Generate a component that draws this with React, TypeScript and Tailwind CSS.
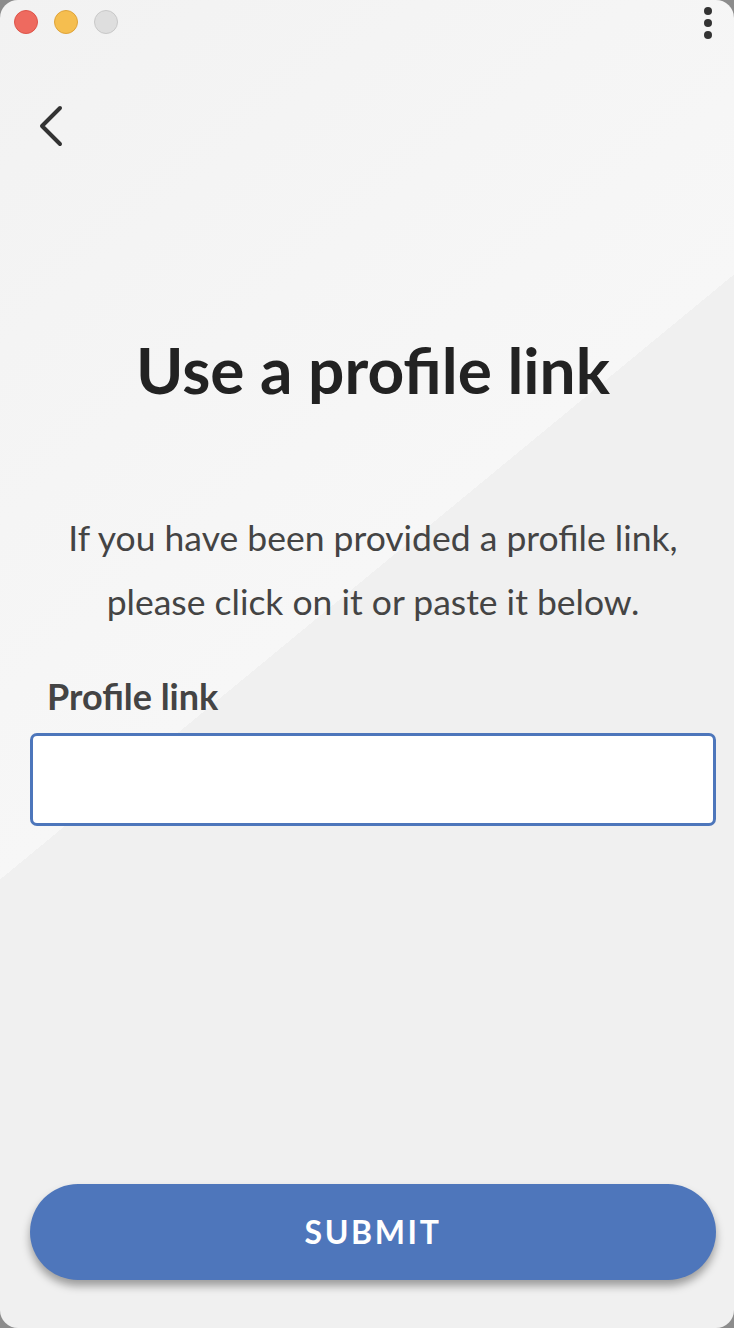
import React from 'react'

const App: React.FC = () => {
	return (
		<div className="h-screen w-full bg-[#8c8c8c]" style={{ fontFamily: 'Lato, "Noto Sans", sans-serif' }}>
			<div className="relative flex h-full w-full flex-col overflow-hidden rounded-[18px] bg-[linear-gradient(140.5deg,#f2f2f2_0%,#f7f7f7_45.5%,#f0f0f0_45.5%,#f0f0f0_100%)]">
				{/* title bar */}
				<div className="flex h-[44px] items-center justify-between pl-[14px] pr-[22px]">
					<div className="flex gap-[16px]">
						<span className="h-[24px] w-[24px] rounded-full border border-[#dd5449] bg-[#ee6a5f]" />
						<span className="h-[24px] w-[24px] rounded-full border border-[#dea33a] bg-[#f5be4f]" />
						<span className="h-[24px] w-[24px] rounded-full border border-[#c8c8c8] bg-[#dedede]" />
					</div>
					<div className="flex flex-col gap-[4px] pt-[2px]">
						<span className="h-[8px] w-[8px] rounded-full bg-[#333]" />
						<span className="h-[8px] w-[8px] rounded-full bg-[#333]" />
						<span className="h-[8px] w-[8px] rounded-full bg-[#333]" />
					</div>
				</div>

				<div className="flex flex-1 flex-col pl-[30px] pr-[18px]">
					<button className="ml-[6px] mt-[61px] h-[42px] w-[30px]">
						<svg width="30" height="42" viewBox="0 0 30 42" fill="none" stroke="#333" strokeWidth="4" strokeLinecap="round" strokeLinejoin="round">
							<path d="M24 3 L6 21 L24 39" />
						</svg>
					</button>

					<h1 className="mt-[185px] text-center text-[64px] font-bold leading-[76px] text-[#222]">Use a profile link</h1>

					<p className="mt-[98px] text-center text-[35.5px] leading-[64px] text-[#444]">
						If you have been provided a profile link,
						<br />
						please click on it or paste it below.
					</p>

					<label className="ml-[17px] mt-[40px] text-[36px] font-bold leading-[44px] text-[#444]">Profile link</label>

					<input className="mt-[15px] h-[93px] rounded-[7px] border-[3px] border-[#4d76bb] bg-white px-4 text-[30px] outline-none" />

					<div className="flex-1" />

					<button className="mb-[48px] h-[96px] rounded-full bg-[#4e76bb] text-[32px] font-bold tracking-[2.6px] text-white shadow-[0_6px_8px_rgba(0,0,0,0.35)]">
						SUBMIT
					</button>
				</div>
			</div>
		</div>
	)
}

export default App
